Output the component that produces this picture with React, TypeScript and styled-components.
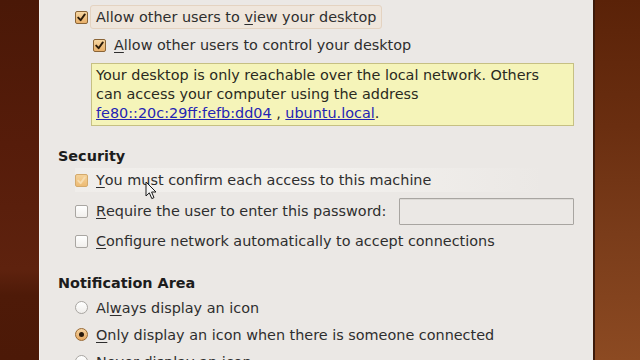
import React from 'react';
import styled, { createGlobalStyle } from 'styled-components';

const GlobalStyle = createGlobalStyle`
    html, body {
        margin: 0;
        padding: 0;
        width: 640px;
        height: 360px;
        overflow: hidden;
        background: #4c1a08;
    }
    * {
        box-sizing: border-box;
    }
`;

const Screen = styled.div`
    position: relative;
    display: flex;
    width: 640px;
    height: 360px;
    overflow: hidden;
    font-family: 'DejaVu Sans', 'Liberation Sans', sans-serif;
    font-size: 14.4px;
    color: #2e2e2e;
`;

const Wallpaper = styled.div<{ side: 'left' | 'right' }>`
    flex: none;
    width: ${({ side }) => (side === 'left' ? '39px' : '45px')};
    background: ${({ side }) =>
        side === 'left'
            ? 'linear-gradient(180deg, #4a1807 0%, #561c0a 40%, #5e220e 75%, #4e1a08 82%, #4c1907 100%)'
            : 'linear-gradient(180deg, #5a2208 0%, #6a2e10 35%, #7a3c1a 65%, #8c4a22 100%)'};
`;

const Dialog = styled.div`
    flex: 1;
    display: flex;
    flex-direction: column;
    padding: 0 19px 0 18px;
    background: #ebe8e5;
    border-left: 1px solid #f4f2ef;
    border-right: 2px solid #3c1a0a;
    overflow: hidden;

    & > * {
        flex-shrink: 0;
    }
`;

const Heading = styled.div<{ top: number }>`
    display: flex;
    align-items: center;
    height: 20px;
    margin-top: ${({ top }) => top}px;
    font-weight: bold;
    color: #1c1c1c;
`;

const Section = styled.div`
    display: flex;
    flex-direction: column;
    padding-left: 17px;

    & > * {
        flex-shrink: 0;
    }
`;

const Row = styled.div<{ h: number; indent?: number; top?: number }>`
    display: flex;
    align-items: center;
    height: ${({ h }) => h}px;
    margin-top: ${({ top }) => top ?? 0}px;
    padding-left: ${({ indent }) => indent ?? 0}px;
    white-space: nowrap;
`;

const Check = styled.span<{ state: 'on' | 'dim' | 'off' }>`
    flex: none;
    display: flex;
    align-items: center;
    justify-content: center;
    width: 13px;
    height: 13px;
    border-radius: 2px;
    margin-right: 2px;
    border: 1px solid
        ${({ state }) => (state === 'on' ? '#8a6436' : state === 'dim' ? '#d4aa6c' : '#a9a6a2')};
    background: ${({ state }) =>
        state === 'on'
            ? 'linear-gradient(180deg, #f6d6a2 0%, #e8b06a 100%)'
            : state === 'dim'
            ? 'linear-gradient(180deg, #f4d29a 0%, #edbb74 100%)'
            : 'linear-gradient(180deg, #ffffff 0%, #f1efec 100%)'};
`;

const Radio = styled.span<{ on?: boolean }>`
    flex: none;
    display: flex;
    align-items: center;
    justify-content: center;
    width: 13px;
    height: 13px;
    border-radius: 50%;
    margin-right: 2px;
    border: 1px solid ${({ on }) => (on ? '#9a6a34' : '#a9a6a2')};
    background: ${({ on }) =>
        on ? 'linear-gradient(180deg, #f6d3a0 0%, #e6a860 100%)' : 'linear-gradient(180deg, #ffffff 0%, #f0eeeb 100%)'};

    &::after {
        content: '';
        display: ${({ on }) => (on ? 'block' : 'none')};
        width: 5px;
        height: 5px;
        border-radius: 50%;
        background: #2a1a0c;
    }
`;

const Label = styled.span<{ focused?: boolean }>`
    display: flex;
    align-items: center;
    height: 24px;
    padding: 0 5px;
    border: 1px solid ${({ focused }) => (focused ? '#e4d3c1' : 'transparent')};
    border-radius: 3px;
    background: ${({ focused }) => (focused ? '#efe6dc' : 'transparent')};

    u {
        text-decoration-thickness: 1px;
        text-underline-offset: 2px;
    }
`;

const Hover = styled.div`
    display: flex;
    align-items: center;
    width: 470px;
    background: linear-gradient(90deg, rgba(244, 242, 239, 0.5) 0%, rgba(244, 242, 239, 0.9) 50%, rgba(244, 242, 239, 0) 100%);
`;

const InfoBox = styled.div`
    margin: 6px 0 0 16px;
    padding: 2px 4px 2px 4px;
    border: 1px solid #c6c083;
    background: #f5f4b9;
    line-height: 19px;
    color: #2a2a1e;

    a {
        color: #2424b4;
        text-decoration: underline;
        text-decoration-thickness: 1px;
    }
`;

const Entry = styled.div`
    flex: none;
    width: 175px;
    height: 27px;
    margin-left: auto;
    border: 1px solid #a8a5a1;
    border-radius: 1px;
    background: #ebe8e5;
    box-shadow: inset 0 1px 0 #dcd9d5;
`;

const Cursor = styled.svg`
    position: absolute;
    left: 145px;
    top: 181px;
`;

const CheckMark: React.FC<{ color: string }> = ({ color }) => (
    <svg width="9" height="9" viewBox="0 0 9 9">
        <path d="M1.2 4.6 L3.6 7.2 L7.8 1.4" fill="none" stroke={color} strokeWidth="1.9" strokeLinecap="round" strokeLinejoin="round" />
    </svg>
);

export default function App() {
    return (
        <Screen>
            <GlobalStyle />
            <Wallpaper side="left" />
            <Dialog>
                <Heading top={-18}>Sharing</Heading>
                <Section>
                    <Row h={24} top={3}>
                        <Check state="on">
                            <CheckMark color="#2c1c0a" />
                        </Check>
                        <Label focused>
                            Allow other users to&nbsp;<u>v</u>iew your desktop
                        </Label>
                    </Row>
                    <Row h={24} top={4} indent={18}>
                        <Check state="on">
                            <CheckMark color="#2c1c0a" />
                        </Check>
                        <Label>
                            <u>A</u>llow other users to control your desktop
                        </Label>
                    </Row>
                    <InfoBox>
                        Your desktop is only reachable over the local network. Others
                        <br />
                        can access your computer using the address
                        <br />
                        <a>fe80::20c:29ff:fefb:dd04</a> , <a>ubuntu.local</a>.
                    </InfoBox>
                </Section>

                <Heading top={20}>Security</Heading>
                <Section>
                    <Row h={32} top={-2}>
                        <Hover>
                            <Check state="dim">
                                <CheckMark color="#f6dcb0" />
                            </Check>
                            <Label>
                                <u>Y</u>ou must confirm each access to this machine
                            </Label>
                        </Hover>
                    </Row>
                    <Row h={30}>
                        <Check state="off" />
                        <Label>
                            <u>R</u>equire the user to enter this password:
                        </Label>
                        <Entry />
                    </Row>
                    <Row h={30}>
                        <Check state="off" />
                        <Label>
                            <u>C</u>onfigure network automatically to accept connections
                        </Label>
                    </Row>
                </Section>

                <Heading top={17}>Notification Area</Heading>
                <Section>
                    <Row h={27} top={1}>
                        <Radio />
                        <Label>
                            Al<u>w</u>ays display an icon
                        </Label>
                    </Row>
                    <Row h={27}>
                        <Radio on />
                        <Label>
                            <u>O</u>nly display an icon when there is someone connected
                        </Label>
                    </Row>
                    <Row h={27}>
                        <Radio />
                        <Label>
                            <u>N</u>ever display an icon
                        </Label>
                    </Row>
                </Section>
            </Dialog>
            <Wallpaper side="right" />
            <Cursor width="12" height="19" viewBox="0 0 12 19">
                <path
                    d="M1 1 L1 15 L4.3 11.8 L6.8 17.6 L9 16.6 L6.6 11 L11 11 Z"
                    fill="#f4f4f4"
                    stroke="#1a1a1a"
                    strokeWidth="1"
                    strokeLinejoin="round"
                />
            </Cursor>
        </Screen>
    );
}
